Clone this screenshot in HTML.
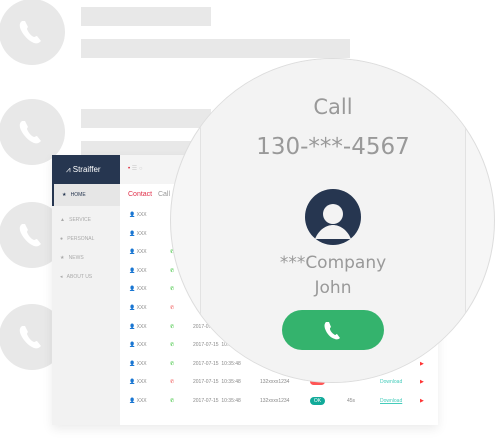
<!DOCTYPE html>
<html><head><style>
*{margin:0;padding:0;box-sizing:border-box}
body{width:496px;height:441px;background:#fff;position:relative;overflow:hidden;font-family:"Liberation Sans",sans-serif}
.a{position:absolute}
.bc{position:absolute;width:66px;height:66px;border-radius:50%;background:#e8e8e8;left:-1px}
.bar{position:absolute;background:#e8e8e8;left:81px;height:19px}
.row{position:absolute;left:120px;width:318px;height:18px;font-size:5px;color:#888}
.row span{position:absolute;top:6px}
</style></head><body>
<div class="bc" style="top:-1px"></div>
<div class="bc" style="top:99px"></div>
<div class="bc" style="top:202px"></div>
<div class="bc" style="top:304px"></div>
<svg class="a" style="left:0;top:0" width="70" height="441" viewBox="0 0 70 441">
<g fill="#fff">
<path id="ph" d="M22 21c-3 2-3 6 0 11c3 5 7 9 12 11c3 1 5 0 7-2l-4-5c-1 0-2 1-3 1c-3-1-6-5-7-8c0-1 1-2 1-2l-3-6z"/>
<use href="#ph" y="100"/><use href="#ph" y="203"/><use href="#ph" y="305"/>
</g></svg>
<div class="bar" style="top:7px;width:130px"></div>
<div class="bar" style="top:39px;width:269px"></div>
<div class="bar" style="top:109px;width:130px"></div>
<div class="bar" style="top:141px;width:130px"></div>

<div class="a" style="left:52px;top:155px;width:386px;height:270px;background:#fafafa;box-shadow:0 4px 10px rgba(0,0,0,.08)"></div>
<div class="a" style="left:52px;top:155px;width:68px;height:270px;background:#f2f2f2"></div>
<div class="a" style="left:52px;top:155px;width:68px;height:29px;background:#263650;color:#fff;font-size:8px;line-height:29px;padding-left:14px">⩘ Straiffer</div>
<div class="a" style="left:120px;top:155px;width:318px;height:29px;background:#f4f4f4;font-size:6px;color:#ccc;line-height:29px;padding-left:8px"><span style="color:#d23">•</span> ☰ ○</div>
<div class="a" style="left:52px;top:184px;width:68px;height:22px;background:#e6e6e6;border-left:2px solid #263650;font-size:5px;color:#263650;line-height:22px;padding-left:8px">★ &nbsp;&nbsp;HOME</div>
<div class="a" style="left:60px;top:211px;font-size:5px;color:#aaa;line-height:19px">▲ &nbsp;&nbsp;SERVICE<br>● &nbsp;&nbsp;PERSONAL<br>★ &nbsp;&nbsp;NEWS<br>◂ &nbsp;&nbsp;ABOUT US</div>
<div class="a" style="left:120px;top:184px;width:318px;height:22px;background:#fff;font-size:7px;line-height:22px;padding-left:8px"><span style="color:#e0304a">Contact</span> &nbsp;&nbsp;<span style="color:#999">Call</span></div>
<div class="a" style="left:120px;top:206px;width:318px;height:219px;background:#fff"></div>

<div class="row" style="top:206px"><span style="left:9px">👤 XXX</span></div>
<div class="row" style="top:225px"><span style="left:9px">👤 XXX</span></div>
<div class="row" style="top:243px"><span style="left:9px">👤 XXX</span><span style="left:50px;color:#2b2">✆</span></div>
<div class="row" style="top:262px"><span style="left:9px">👤 XXX</span><span style="left:50px;color:#2b2">✆</span></div>
<div class="row" style="top:280px"><span style="left:9px">👤 XXX</span><span style="left:50px;color:#2b2">✆</span></div>
<div class="row" style="top:299px"><span style="left:9px">👤 XXX</span><span style="left:50px;color:#e44">✆</span></div>
<div class="row" style="top:318px"><span style="left:9px">👤 XXX</span><span style="left:50px;color:#2b2">✆</span><span style="left:73px">2017-07-15 &nbsp;10:35:48</span></div>
<div class="row" style="top:336px"><span style="left:9px">👤 XXX</span><span style="left:50px;color:#2b2">✆</span><span style="left:73px">2017-07-15 &nbsp;10:35:48</span></div>
<div class="row" style="top:355px"><span style="left:9px">👤 XXX</span><span style="left:50px;color:#2b2">✆</span><span style="left:73px">2017-07-15 &nbsp;10:35:48</span><span style="left:300px;color:#f33">▶</span></div>
<div class="row" style="top:373px"><span style="left:9px">👤 XXX</span><span style="left:50px;color:#e44">✆</span><span style="left:73px">2017-07-15 &nbsp;10:35:48</span><span style="left:140px">132xxxx1234</span><span style="left:190px;top:5px;width:15px;height:7px;border-radius:4px;background:#f55"></span><span style="left:260px;color:#4cb">Download</span><span style="left:300px;color:#f33">▶</span></div>
<div class="row" style="top:392px"><span style="left:9px">👤 XXX</span><span style="left:50px;color:#2b2">✆</span><span style="left:73px">2017-07-15 &nbsp;10:35:48</span><span style="left:140px">132xxxx1234</span><span style="left:190px;top:5px;width:15px;height:8px;border-radius:4px;background:#1a9;color:#fff;text-align:center;line-height:8px">OK</span><span style="left:227px">45s</span><span style="left:260px;color:#4cb;text-decoration:underline">Download</span><span style="left:300px;color:#f33">▶</span></div>

<div class="a" style="left:170px;top:58px;width:325px;height:325px;border-radius:50%;background:#f6f6f6;border:1px solid #ddd;overflow:hidden">
 <div class="a" style="left:29px;top:0;width:266px;height:325px;background:#f3f3f3;border-left:1px solid #e2e2e2;border-right:1px solid #e2e2e2"></div>
</div>
<div class="a" style="left:170px;top:92px;width:326px;text-align:center;color:#999;font-family:'DejaVu Sans',sans-serif">
 <div style="font-size:21px;line-height:30px">Call</div>
 <div style="font-size:23px;line-height:34px;margin-top:8px">130-***-4567</div>
</div>
<svg class="a" style="left:305px;top:189px" width="56" height="56" viewBox="0 0 56 56">
<circle cx="28" cy="28" r="28" fill="#263650"/>
<circle cx="28" cy="25" r="10" fill="#f3f3f3"/>
<path d="M10 50c4-10 12-14 18-14s14 4 18 14z" fill="#f3f3f3"/></svg>
<div class="a" style="left:170px;top:251px;width:326px;text-align:center;color:#999;font-size:17px;line-height:25px;font-family:'DejaVu Sans',sans-serif">***Company<br>John</div>
<div class="a" style="left:282px;top:310px;width:102px;height:40px;border-radius:20px;background:#34b36d"></div>
<svg class="a" style="left:321px;top:318px" width="24" height="24" viewBox="0 0 24 24"><path d="M5 4c-2 2-2 5 0 9c2 4 5 7 9 8c2 1 4 0 5-1l-3-4c-1 0-1 1-2 1c-2-1-5-4-5-6c0-1 0-1 1-2l-2-5z" fill="#fff"/></svg>
</body></html>
